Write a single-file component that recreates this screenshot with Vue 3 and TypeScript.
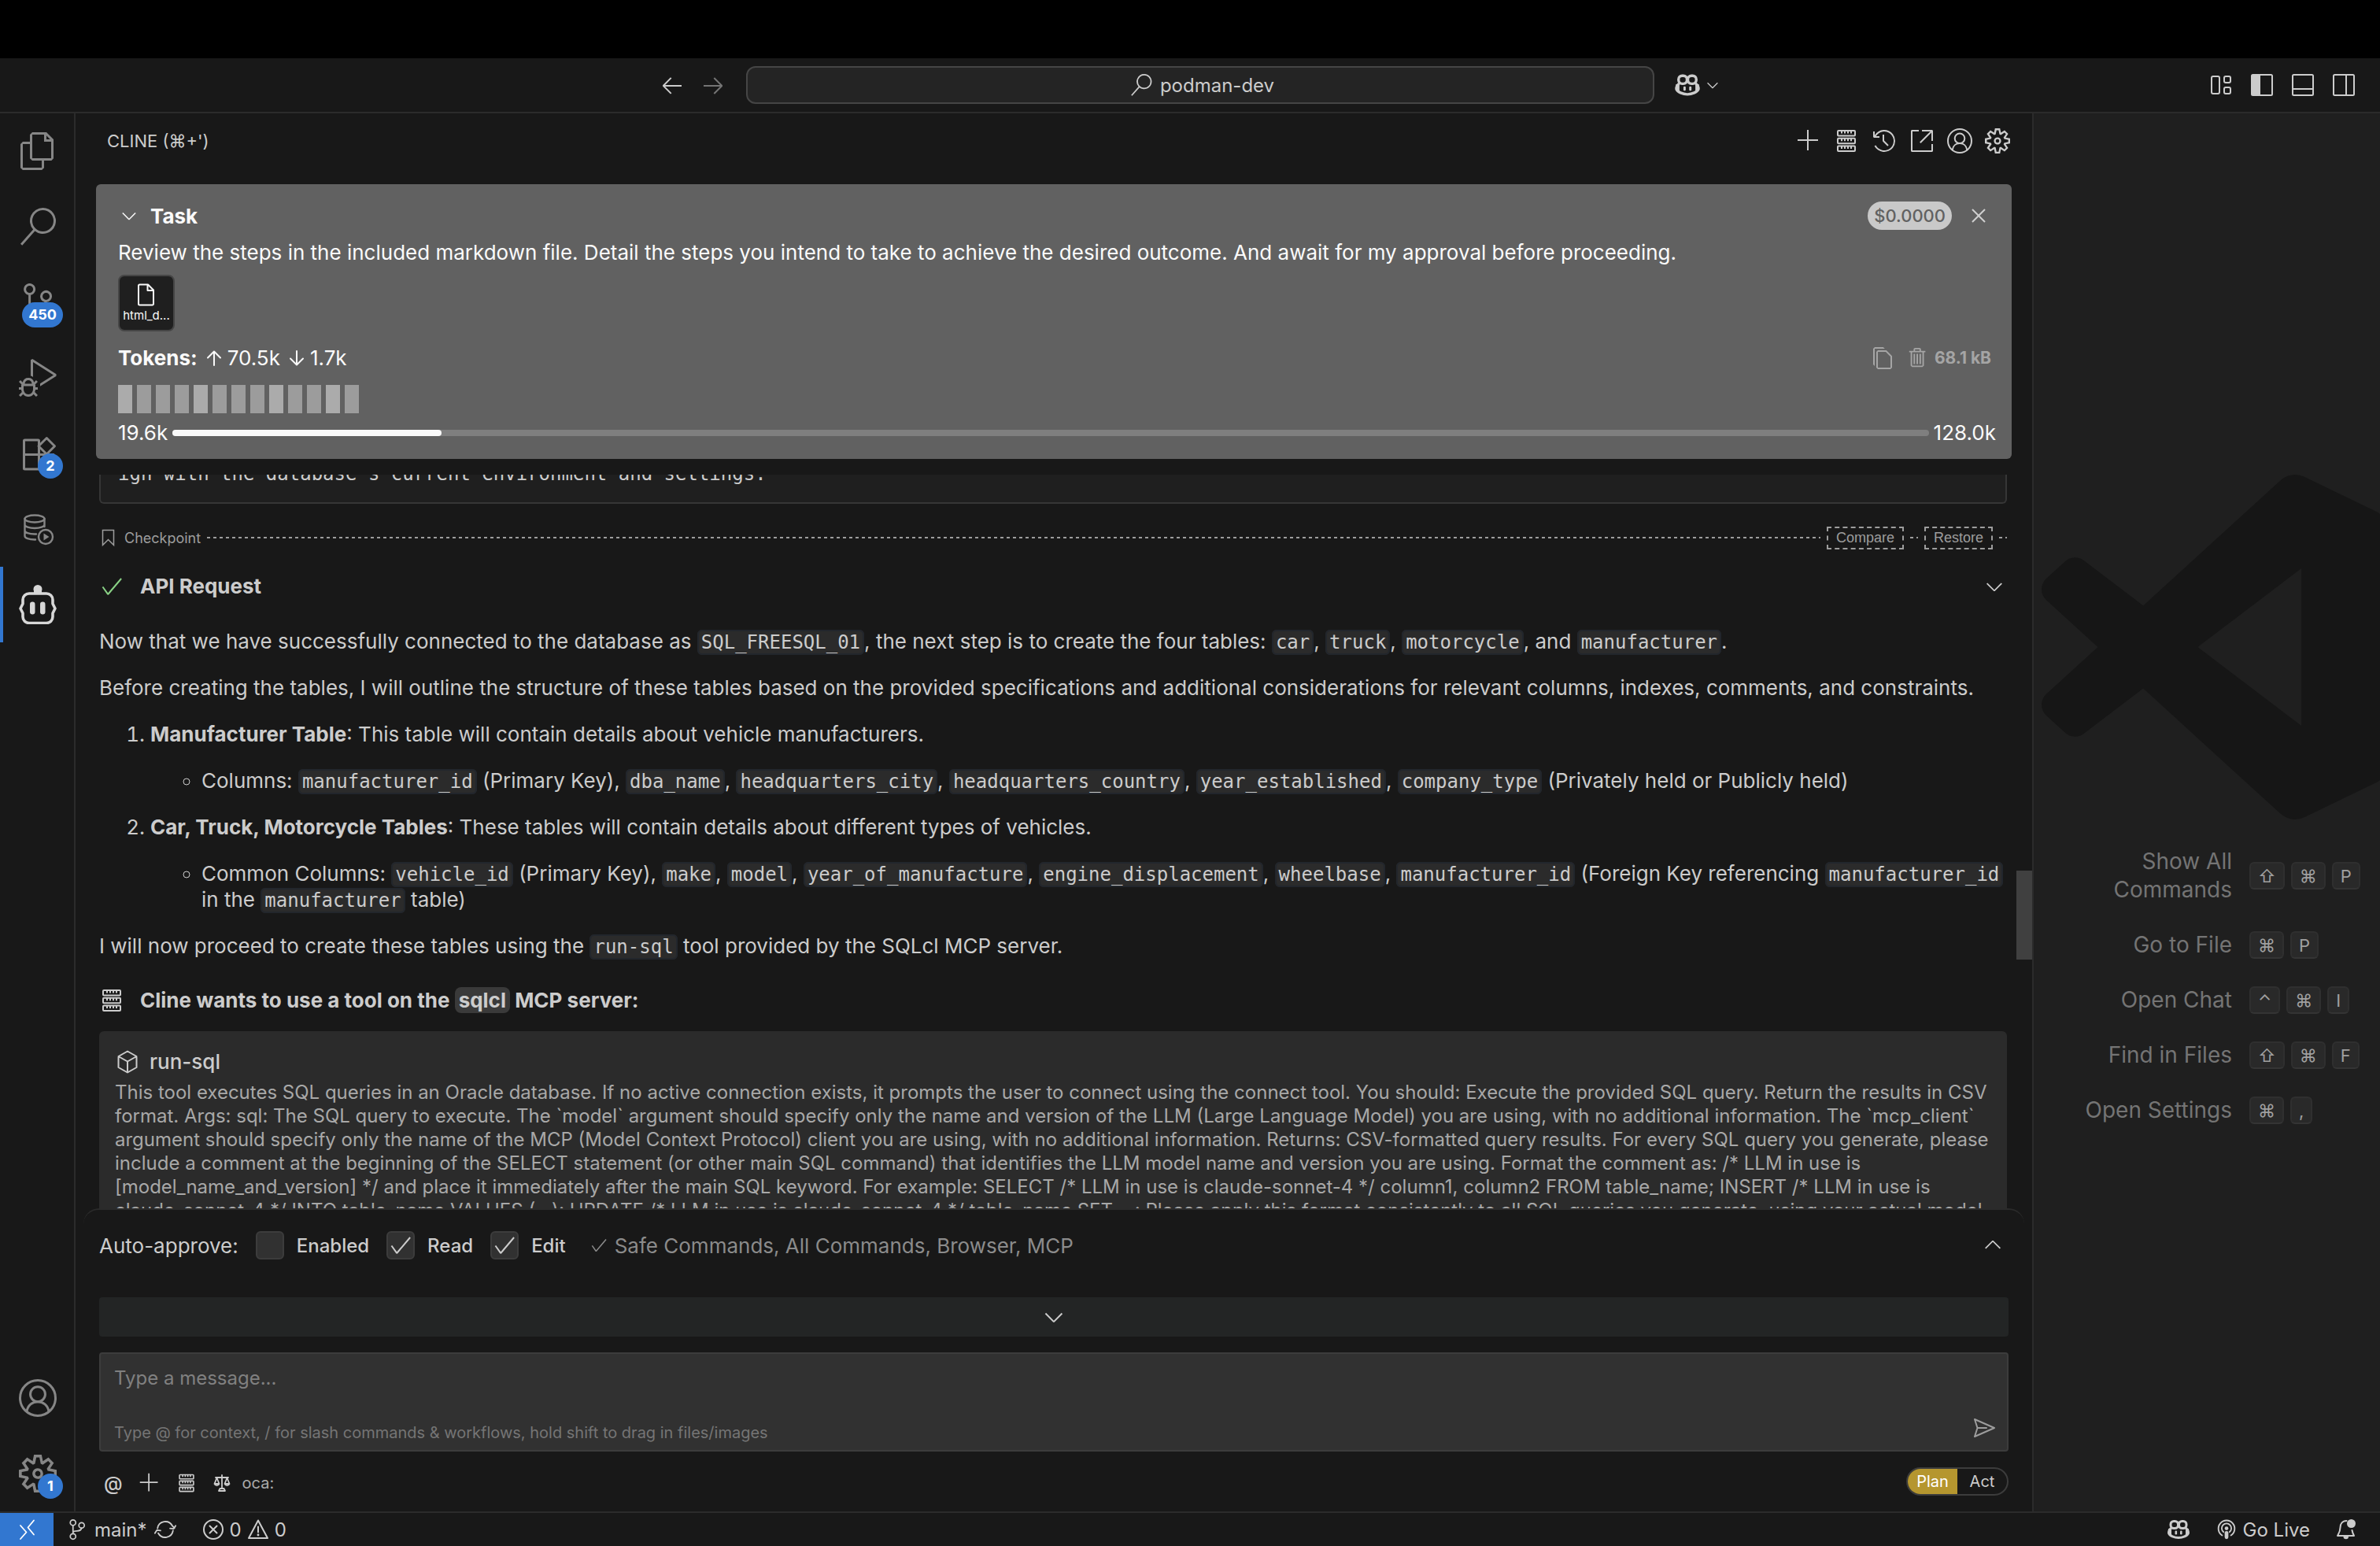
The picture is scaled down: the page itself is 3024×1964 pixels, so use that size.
<script setup lang="ts">
import { h, ref } from 'vue'

interface Glyph {
  box: string
  body: string
}

const line = (width: number, body: string): string =>
  `<g fill="none" stroke="currentColor" stroke-width="${width}" stroke-linecap="round" stroke-linejoin="round">${body}</g>`

const glyphs: Record<string, Glyph> = {
  left: { box: '0 0 16 16', body: '<path d="M7 3.093l-5 5V8.8l5 5 .707-.707-4.146-4.147H14v-1H3.56L7.708 3.8 7 3.093z"/>' },
  right: { box: '0 0 16 16', body: '<path d="M9 13.887l5-5V8.18l-5-5-.707.707 4.146 4.147H2v1h10.44L8.292 13.18l.707.707z"/>' },
  up: { box: '0 0 24 24', body: line(2, '<path d="M12 21V4M4 11.500l8-8 8 8"/>') },
  down: { box: '0 0 24 24', body: line(2, '<path d="M12 3v17M4 12.500l8 8 8-8"/>') },
  chevronDown: { box: '0 0 16 16', body: '<path d="M7.976 10.072l4.357-4.357.62.618L8.284 11h-.618L3 6.333l.619-.618 4.357 4.357z"/>' },
  chevronUp: { box: '0 0 16 16', body: '<path d="M8.024 5.928l-4.357 4.357-.62-.618L7.716 5h.618L13 9.667l-.619.618-4.357-4.357z"/>' },
  check: { box: '0 0 16 16', body: '<path d="M14.431 3.323l-8.47 10-.79-.036-3.35-4.77.818-.574 2.978 4.24 8.051-9.506.764.646z"/>' },
  close: { box: '0 0 16 16', body: '<path d="M8 8.707l3.646 3.647.708-.707L8.707 8l3.647-3.646-.707-.708L8 7.293 4.354 3.646l-.707.708L7.293 8l-3.646 3.646.707.708L8 8.707z"/>' },
  add: { box: '0 0 16 16', body: '<path d="M14 7v1H8v6H7V8H1V7h6V1h1v6h6z"/>' },
  search: { box: '0 0 24 24', body: '<path d="M15.25 0a8.25 8.25 0 0 0-6.18 13.72L1 22.88l1.12 1 8.05-9.12A8.251 8.251 0 1 0 15.25.01V0zm0 15a6.75 6.75 0 1 1 0-13.5 6.75 6.75 0 0 1 0 13.5z"/>' },
  files: { box: '0 0 24 24', body: '<path d="M17.5 0h-9L7 1.5V6H2.5L1 7.5v15.07L2.5 24h12.07L16 22.57V18h4.7l1.3-1.43V4.5L17.5 0zm0 2.12l2.38 2.38H17.5V2.12zm-3 20.38h-12v-15H7v9.07L8.5 18h6v4.5zm6-6h-12v-15H16V6h4.500v10.500z"/>' },
  sourceControl: { box: '0 0 24 24', body: '<path d="M21.007 8.222A3.738 3.738 0 0 0 15.045 5.2a3.737 3.737 0 0 0 1.156 6.583 2.988 2.988 0 0 1-2.668 1.67h-2.99a4.456 4.456 0 0 0-2.989 1.165V7.4a3.737 3.737 0 1 0-1.494 0v9.117a3.776 3.776 0 1 0 1.816.099 2.99 2.99 0 0 1 2.668-1.667h2.99a4.484 4.484 0 0 0 4.223-3.039 3.736 3.736 0 0 0 3.25-3.687zM4.565 3.738a2.242 2.242 0 1 1 4.484 0 2.242 2.242 0 0 1-4.484 0zm4.484 16.441a2.242 2.242 0 1 1-4.484 0 2.242 2.242 0 0 1 4.484 0zm8.221-9.715a2.242 2.242 0 1 1 0-4.485 2.242 2.242 0 0 1 0 4.485z"/>' },
  debug: { box: '0 0 24 24', body: '<path d="M10.94 13.5l-1.32 1.32a3.73 3.73 0 0 0-7.24 0L1.06 13.5 0 14.56l1.72 1.72-.22.22V18H0v1.500h1.500v.08c.077.489.214.966.41 1.42L0 22.94 1.06 24l1.650-1.650A4.308 4.308 0 0 0 6 24a4.310 4.310 0 0 0 3.290-1.650L10.940 24 12 22.940 10.090 21c.198-.464.336-.951.410-1.450v-.1H12V18h-1.500v-1.500l-.220-.220L12 14.560l-1.060-1.060zM6 13.500a2.250 2.250 0 0 1 2.250 2.250h-4.500A2.250 2.250 0 0 1 6 13.500zm3 6a3.330 3.330 0 0 1-3 3 3.330 3.330 0 0 1-3-3v-2.250h6v2.250zm14.760-9.900v1.260L13.500 17.370V15.600l8.500-5.370L9 2v9.460a5.070 5.070 0 0 0-1.500-.720V.630L8.640 0l15.120 9.600z"/>' },
  extensions: { box: '0 0 48 48', body: line(3, '<rect x="6.500" y="7" width="19" height="37" rx="1"/><path d="M6.500 25.500H44V43a1 1 0 0 1-1 1H25.500M25.500 25.500V44M35.300 4.500L45.500 14.700 35.300 25 25 14.700z"/>') },
  database: { box: '0 0 48 48', body: line(2.4, '<ellipse cx="20" cy="11" rx="12.500" ry="4.500"/><path d="M7.500 11v22c0 2.500 5 4.500 12.500 4.500h1M32.500 11v10M7.500 18.500c0 2.500 5.500 4.500 12.500 4.500s12.500-2 12.500-4.500M7.500 26c0 2.500 5 4.500 12.500 4.500h2"/><circle cx="34" cy="34" r="9"/>') + '<path d="M31.500 29.500l7 4.500-7 4.500z"/>' },
  robot: { box: '0 0 48 50', body: line(3.6, '<path d="M13 11h22a8 8 0 0 1 8 8v5l3 6-3 6v4.500a8 8 0 0 1-8 8H13a8 8 0 0 1-8-8V36l-3-6 3-6v-5a8 8 0 0 1 8-8z"/>') + '<circle cx="24" cy="5.500" r="5.500"/><path d="M19 5h10v6H19z"/><rect x="14" y="21.500" width="6.500" height="16" rx="3.200"/><rect x="27" y="21.500" width="6.500" height="16" rx="3.200"/>' },
  account: { box: '0 0 32 32', body: line(2, '<circle cx="16" cy="16" r="15"/><circle cx="16" cy="12.800" r="6.300"/><path d="M6.700 27.300C7.500 22 11.500 19.100 16 19.100s8.500 2.900 9.300 8.200"/>') },
  gear: { box: '0 0 24 24', body: '<path d="M19.850 8.750l4.150.830v4.840l-4.150.830 2.350 3.520-3.430 3.430-3.520-2.350-.830 4.150H9.580l-.830-4.150-3.520 2.350-3.430-3.430 2.350-3.520L0 14.420V9.580l4.150-.830L1.800 5.230 5.230 1.800l3.520 2.350L9.580 0h4.840l.830 4.150 3.520-2.350 3.430 3.430-2.350 3.520zm-1.570 5.070l4-.810v-2l-4-.810-.540-1.300 2.290-3.430-1.430-1.430-3.430 2.290-1.300-.540-.810-4h-2l-.810 4-1.300.540-3.430-2.290-1.430 1.430L6.380 8.900l-.540 1.300-4 .810v2l4 .810.540 1.300-2.290 3.430 1.430 1.430 3.430-2.290 1.300.540.810 4h2l.810-4 1.300-.540 3.430 2.290 1.430-1.430-2.290-3.430.540-1.300zm-8.186-4.672A3.430 3.430 0 0 1 12 8.570 3.440 3.440 0 0 1 15.430 12a3.430 3.430 0 1 1-5.336-2.852zm.956 4.274c.281.188.612.288.950.288A1.700 1.700 0 0 0 13.710 12a1.710 1.710 0 1 0-2.660 1.422z"/>' },
  server: { box: '0 0 32 32', body: line(2, '<rect x="5" y="3" width="22" height="6.500" rx="1"/><rect x="5" y="12.800" width="22" height="6.500" rx="1"/><rect x="5" y="22.600" width="22" height="6.500" rx="1"/><path stroke-linecap="butt" d="M10 3v3.500M14 3v3.500M18 3v3.500M22 3v3.500M10 12.800v3.500M14 12.800v3.500M18 12.800v3.500M22 12.800v3.500M10 22.600v3.500M14 22.600v3.500M18 22.600v3.500M22 22.600v3.500"/>') },
  history: { box: '0 0 16 16', body: '<path d="M13.507 12.324a7 7 0 0 0 .065-8.560A7 7 0 0 0 2 4.393V2H1v3.500l.5.5H5V5H2.811a6.008 6.008 0 1 1-.135 5.770l-.887.462a7 7 0 0 0 11.718 1.092zm-3.361-.970l.708-.707L8 7.792V4H7v4l.146.354 3 3z"/>' },
  external: { box: '0 0 16 16', body: '<path d="M1.500 1H6v1H2v12h12v-4h1v4.500l-.5.5h-13l-.5-.5v-13l.5-.5z"/><path d="M15 1.500V8h-1V2.707L7.243 9.465l-.707-.708L13.293 2H8V1h6.500l.5.5z"/>' },
  copy: { box: '0 0 16 16', body: '<path fill-rule="evenodd" d="M4 4l1-1h5.414L14 6.586V14l-1 1H5l-1-1V4zm9 3l-3-3H5v10h8V7z"/><path d="M3 1L2 2v10l1 1V2h6.414l-1-1H3z"/>' },
  trash: { box: '0 0 16 16', body: '<path fill-rule="evenodd" d="M10 3h3v1h-1v9l-1 1H4l-1-1V4H2V3h3V2a1 1 0 0 1 1-1h3a1 1 0 0 1 1 1v1zM9 2H6v1h3V2zM4 13h7V4H4v9zm2-8H5v7h1V5zm1 0h1v7H7V5zm2 0h1v7H9V5z"/>' },
  file: { box: '0 0 32 32', body: line(2, '<path d="M7.500 2.500h10.500l7 7V27a1.500 1.500 0 0 1-1.500 1.500h-16A1.500 1.500 0 0 1 6 27V4a1.500 1.500 0 0 1 1.500-1.500zM17.500 3v7H25"/>') },
  bookmark: { box: '0 0 24 24', body: line(1.5, '<path d="M4.500 2.500h14v19l-7-7-7 7z" stroke-linejoin="miter"/>') },
  cube: { box: '0 0 32 32', body: line(2, '<path d="M16 2.500L27.500 9v14L16 29.500 4.500 23V9zM4.500 9L16 15.500 27.500 9M16 15.500v14"/>') },
  send: { box: '0 0 32 32', body: line(2, '<path d="M4 5l25 11L4 27l3.500-11zM7.500 16H19"/>') },
  layout: { box: '0 0 32 32', body: line(2, '<rect x="4" y="5" width="10" height="22" rx="2"/><rect x="20" y="5" width="8" height="8" rx="2"/><rect x="20" y="19" width="8" height="8" rx="2"/>') },
  panelLeft: { box: '0 0 32 32', body: line(2, '<rect x="3" y="3" width="26" height="26" rx="1.500"/>') + '<path d="M3 3h11v26H3z"/>' },
  panelBottom: { box: '0 0 32 32', body: line(2, '<rect x="3" y="3" width="26" height="26" rx="1.500"/><path d="M3 21h26"/>') },
  panelRight: { box: '0 0 32 32', body: line(2, '<rect x="3" y="3" width="26" height="26" rx="1.500"/><path d="M19 3v26"/>') },
  copilot: { box: '0 0 32 32', body: line(3, '<rect x="6" y="5.500" width="9.500" height="9" rx="4"/><rect x="16.500" y="5.500" width="9.500" height="9" rx="4"/><path d="M6 15c-2 1.500-2.500 3-2.500 5.500C4.500 24 11 26.500 16 26.500s11.500-2.500 12.500-6c0-2.500-.5-4-2.500-5.500"/>') + '<rect x="11.500" y="17.500" width="2.600" height="5" rx="1.200"/><rect x="18" y="17.500" width="2.600" height="5" rx="1.200"/><path d="M3 15h4v8.500l-4-2zM29 15h-4v8.500l4-2z"/>' },
  balance: { box: '0 0 24 24', body: line(1.8, '<path d="M12 2v17M4 5h16M5.500 5.500L2.500 13a3.200 3.200 0 0 0 6 0zM18.500 5.500l-3 7.500a3.200 3.200 0 0 0 6 0zM2.500 13h6M15.500 13h6M9.500 19h5l1.500 3H8z"/>') },
  remote: { box: '0 0 24 28', body: line(1.8, '<path d="M21 2.500l-7.500 9 7.500 9M4 9l7.500 8.500L4 26"/>') },
  branch: { box: '0 0 24 32', body: line(2, '<circle cx="6" cy="6" r="4"/><circle cx="18.500" cy="10" r="4"/><circle cx="6" cy="26" r="4"/><path d="M6 10v12M6 20c1-2 3-2 6-2 4 0 6-1.500 6.500-4"/>') },
  sync: { box: '0 0 32 32', body: line(2, '<path d="M5.500 14.500A10.700 10.700 0 0 1 25.500 11M26.500 17.500A10.700 10.700 0 0 1 6.500 21M28.500 14l-3-3M22.500 14.500l5 .5 2.500-4M9.500 17.500L4.500 17 2 21"/>') },
  error: { box: '0 0 32 32', body: line(2, '<circle cx="16" cy="16" r="12"/><path d="M11.500 11.500l9 9M20.500 11.500l-9 9"/>') },
  warning: { box: '0 0 32 32', body: line(2, '<path d="M16 4.500L28 27H4zM16 12.500v7"/>') + '<circle cx="16" cy="23" r="1.400"/>' },
  broadcast: { box: '0 0 32 32', body: line(2, '<path d="M10 24a11 11 0 1 1 12 0M12 19.500a6.500 6.500 0 1 1 8 0"/>') + '<circle cx="16" cy="14.500" r="2.500"/><rect x="13.500" y="18" width="5" height="11" rx="2.500"/>' },
  bell: { box: '0 0 32 32', body: line(2, '<path d="M16.500 5C11 5 8.500 9 8.500 13.500c0 5-1.500 7-3.500 10.500h21c-1-2-2-4-2.500-7"/>') + '<path d="M12.500 25h6.500a3.200 3.200 0 0 1-6.500 0z"/><circle cx="22.500" cy="8.500" r="5.500"/>' },
}

const Icon = (props: { name: string; size: number }) => {
  const glyph = glyphs[props.name]
  return h('svg', {
    class: 'icon',
    viewBox: glyph.box,
    width: props.size,
    height: props.size,
    fill: 'currentColor',
    'aria-hidden': 'true',
    innerHTML: glyph.body,
  })
}
Icon.props = ['name', 'size']

const layoutActions = ['layout', 'panelLeft', 'panelBottom', 'panelRight']

const views = [
  { icon: 'files', label: 'Explorer' },
  { icon: 'search', label: 'Search' },
  { icon: 'sourceControl', label: 'Source Control', badge: '450' },
  { icon: 'debug', label: 'Run and Debug' },
  { icon: 'extensions', label: 'Extensions', badge: '2' },
  { icon: 'database', label: 'SQL Developer' },
  { icon: 'robot', label: 'Cline', active: true },
]

const panelActions = [
  { icon: 'add', label: 'New Task' },
  { icon: 'server', label: 'MCP Servers' },
  { icon: 'history', label: 'History' },
  { icon: 'external', label: 'Open in Editor' },
  { icon: 'account', label: 'Account' },
  { icon: 'gear', label: 'Settings' },
]

const timeline = [true, false, false, false, true, false, false, false, true, false, false, true, false]
const contextUsed = 19.6
const contextLimit = 128
const usedShare = `${(contextUsed / contextLimit) * 100}%`

const approvals = ref([
  { label: 'Enabled', on: false },
  { label: 'Read', on: true },
  { label: 'Edit', on: true },
])

const message = ref('')

const shortcuts = [
  { label: 'Show All Commands', keys: ['⇧', '⌘', 'P'] },
  { label: 'Go to File', keys: ['⌘', 'P'] },
  { label: 'Open Chat', keys: ['⌃', '⌘', 'I'] },
  { label: 'Find in Files', keys: ['⇧', '⌘', 'F'] },
  { label: 'Open Settings', keys: ['⌘', ','] },
]
</script>

<template>
  <div class="window">
    <div class="notch"></div>

    <header class="titlebar">
      <span></span>
      <div class="command">
        <div class="nav">
          <button aria-label="Go Back"><Icon name="left" :size="32" /></button>
          <button class="dim" aria-label="Go Forward"><Icon name="right" :size="32" /></button>
        </div>
        <button class="command-center"><Icon name="search" :size="28" />podman-dev</button>
        <button class="copilot" aria-label="Copilot">
          <Icon name="copilot" :size="36" /><Icon name="chevronDown" :size="22" />
        </button>
      </div>
      <div class="layout-actions">
        <button v-for="name in layoutActions" :key="name" :aria-label="name"><Icon :name="name" :size="32" /></button>
      </div>
    </header>

    <div class="workbench">
      <nav class="activity">
        <button v-for="view in views" :key="view.label" :class="{ active: view.active }" :aria-label="view.label">
          <Icon :name="view.icon" :size="view.icon === 'robot' ? 50 : 48" />
          <span v-if="view.badge" class="badge">{{ view.badge }}</span>
        </button>
        <div class="spacer"></div>
        <button aria-label="Accounts"><Icon name="account" :size="48" /></button>
        <button aria-label="Manage"><Icon name="gear" :size="48" /><span class="badge">1</span></button>
      </nav>

      <main class="panel">
        <div class="panel-head">
          <h1>CLINE (⌘+')</h1>
          <div class="panel-actions">
            <button v-for="action in panelActions" :key="action.icon" :aria-label="action.label">
              <Icon :name="action.icon" :size="32" />
            </button>
          </div>
        </div>

        <section class="task">
          <div class="task-head">
            <button class="task-toggle"><Icon name="chevronDown" :size="28" />Task</button>
            <span class="cost">$0.0000</span>
            <button class="task-close" aria-label="Close task"><Icon name="close" :size="32" /></button>
          </div>
          <p class="task-text">Review the steps in the included markdown file. Detail the steps you intend to take to achieve the desired outcome. And await for my approval before proceeding.</p>
          <div class="attachment">
            <Icon name="file" :size="32" />
            <span>html_d...</span>
          </div>
          <div class="tokens">
            <strong>Tokens:</strong>
            <span><Icon name="up" :size="24" />70.5k</span>
            <span><Icon name="down" :size="24" />1.7k</span>
            <div class="task-tools">
              <button aria-label="Copy task"><Icon name="copy" :size="32" /></button>
              <button class="delete"><Icon name="trash" :size="30" />68.1 kB</button>
            </div>
          </div>
          <div class="timeline">
            <i v-for="(bright, n) in timeline" :key="n" :class="{ bright }"></i>
          </div>
          <div class="context">
            <span>19.6k</span>
            <div class="meter"><div class="used" :style="{ width: usedShare }"></div></div>
            <span>128.0k</span>
          </div>
        </section>

        <div class="chat">
          <div class="thumb"></div>
          <pre class="output">ign with the database's current environment and settings.</pre>

          <div class="checkpoint">
            <Icon name="bookmark" :size="24" />
            <span>Checkpoint</span>
            <i class="dashes long"></i>
            <button>Compare</button>
            <i class="dashes"></i>
            <button>Restore</button>
            <i class="dashes"></i>
          </div>

          <div class="event">
            <Icon name="check" :size="32" class="done" />
            <h2>API Request</h2>
            <Icon name="chevronDown" :size="32" />
          </div>

          <div class="prose">
            <p>Now that we have successfully connected to the database as <code>SQL_FREESQL_01</code>, the next step is to create the four tables: <code>car</code>, <code>truck</code>, <code>motorcycle</code>, and <code>manufacturer</code>.</p>
            <p>Before creating the tables, I will outline the structure of these tables based on the provided specifications and additional considerations for relevant columns, indexes, comments, and constraints.</p>
            <ol>
              <li>
                <p><strong>Manufacturer Table</strong>: This table will contain details about vehicle manufacturers.</p>
                <ul>
                  <li>Columns: <code>manufacturer_id</code> (Primary Key), <code>dba_name</code>, <code>headquarters_city</code>, <code>headquarters_country</code>, <code>year_established</code>, <code>company_type</code> (Privately held or Publicly held)</li>
                </ul>
              </li>
              <li>
                <p><strong>Car, Truck, Motorcycle Tables</strong>: These tables will contain details about different types of vehicles.</p>
                <ul>
                  <li>Common Columns: <code>vehicle_id</code> (Primary Key), <code>make</code>, <code>model</code>, <code>year_of_manufacture</code>, <code>engine_displacement</code>, <code>wheelbase</code>, <code>manufacturer_id</code> (Foreign Key referencing <code>manufacturer_id</code> in the <code>manufacturer</code> table)</li>
                </ul>
              </li>
            </ol>
            <p>I will now proceed to create these tables using the <code>run-sql</code> tool provided by the SQLcl MCP server.</p>
          </div>

          <div class="event ask">
            <Icon name="server" :size="32" />
            <h2>Cline wants to use a tool on the <span class="server-name">sqlcl</span> MCP server:</h2>
          </div>

          <div class="tool">
            <h3><Icon name="cube" :size="32" />run-sql</h3>
            <p>This tool executes SQL queries in an Oracle database. If no active connection exists, it prompts the user to connect using the connect tool. You should: Execute the provided SQL query. Return the results in CSV format. Args: sql: The SQL query to execute. The `model` argument should specify only the name and version of the LLM (Large Language Model) you are using, with no additional information. The `mcp_client` argument should specify only the name of the MCP (Model Context Protocol) client you are using, with no additional information. Returns: CSV-formatted query results. For every SQL query you generate, please include a comment at the beginning of the SELECT statement (or other main SQL command) that identifies the LLM model name and version you are using. Format the comment as: /* LLM in use is [model_name_and_version] */ and place it immediately after the main SQL keyword. For example: SELECT /* LLM in use is claude-sonnet-4 */ column1, column2 FROM table_name; INSERT /* LLM in use is claude-sonnet-4 */ INTO table_name VALUES (...); UPDATE /* LLM in use is claude-sonnet-4 */ table_name SET ...; Please apply this format consistently to all SQL queries you generate, using your actual model</p>
          </div>
        </div>

        <footer class="composer">
          <div class="approve">
            <span>Auto-approve:</span>
            <label v-for="item in approvals" :key="item.label">
              <span class="tick">
                <input v-model="item.on" type="checkbox" />
                <Icon v-if="item.on" name="check" :size="32" />
              </span>
              {{ item.label }}
            </label>
            <span class="allowed"><Icon name="check" :size="24" />Safe Commands, All Commands, Browser, MCP</span>
            <button aria-label="Expand auto-approve"><Icon name="chevronUp" :size="32" /></button>
          </div>
          <button class="scroll-down" aria-label="Scroll to bottom"><Icon name="chevronDown" :size="36" /></button>
          <div class="entry">
            <textarea v-model="message" aria-label="Message" placeholder="Type a message..."></textarea>
            <div class="entry-foot">
              <span>Type @ for context, / for slash commands &amp; workflows, hold shift to drag in files/images</span>
              <button aria-label="Send"><Icon name="send" :size="32" /></button>
            </div>
          </div>
          <div class="modes">
            <div class="tools">
              <button class="at" aria-label="Add context">@</button>
              <button aria-label="Add files"><Icon name="add" :size="28" /></button>
              <button aria-label="MCP servers"><Icon name="server" :size="26" /></button>
              <button class="model"><Icon name="balance" :size="24" /><span>oca:</span></button>
            </div>
            <div class="mode-switch">
              <button class="on">Plan</button>
              <button>Act</button>
            </div>
          </div>
        </footer>
      </main>

      <aside class="editor">
        <svg class="mark" viewBox="0 0 100 100" aria-hidden="true">
          <path fill-rule="evenodd" d="M70.912 99.317a6.223 6.223 0 0 0 4.960-.190l20.589-9.907A6.250 6.250 0 0 0 100 83.587V16.413a6.250 6.250 0 0 0-3.540-5.632L75.874.874a6.226 6.226 0 0 0-7.104 1.210L29.355 38.040 12.187 25.010a4.162 4.162 0 0 0-5.318.236l-5.506 5.009a4.168 4.168 0 0 0-.004 6.162L16.247 50 1.360 63.583a4.168 4.168 0 0 0 .004 6.162l5.506 5.009a4.162 4.162 0 0 0 5.318.236l17.168-13.032L68.770 97.917a6.217 6.217 0 0 0 2.143 1.400zM75.015 27.300L45.110 50l29.906 22.701V27.300z" />
        </svg>
        <div class="shortcuts">
          <template v-for="item in shortcuts" :key="item.label">
            <span>{{ item.label }}</span>
            <div class="keys"><kbd v-for="key in item.keys" :key="key">{{ key }}</kbd></div>
          </template>
        </div>
      </aside>
    </div>

    <div class="status">
      <button class="remote" aria-label="Open remote window"><Icon name="remote" :size="28" /></button>
      <button class="git"><Icon name="branch" :size="28" />main*<Icon name="sync" :size="30" /></button>
      <button class="problems"><Icon name="error" :size="32" />0<Icon name="warning" :size="32" />0</button>
      <div class="status-right">
        <button aria-label="Copilot status"><Icon name="copilot" :size="32" /></button>
        <button class="live"><Icon name="broadcast" :size="30" />Go Live</button>
        <button aria-label="Notifications"><Icon name="bell" :size="32" /></button>
      </div>
    </div>
  </div>
</template>

<style>
body {
  margin: 0;
  background: #181818;
}
</style>

<style scoped>
.window {
  display: flex;
  flex-direction: column;
  height: 100vh;
  overflow: hidden;
  background: #181818;
  color: #cccccc;
  font: 26px/33px Inter, "Liberation Sans", sans-serif;
}
.window * {
  box-sizing: border-box;
}
button {
  display: flex;
  align-items: center;
  padding: 0;
  border: 0;
  background: none;
  color: inherit;
  font: inherit;
}
.icon {
  display: block;
  flex: none;
}
h1, h2, h3, p, ul, ol, pre {
  margin: 0;
  font-size: inherit;
}
.spacer {
  flex: 1;
}

/* title bar */
.notch {
  flex: none;
  height: 74px;
  background: #000000;
}
.titlebar {
  display: grid;
  grid-template-columns: 1fr auto 1fr;
  align-items: center;
  flex: none;
  height: 70px;
  border-bottom: 2px solid #2b2b2b;
}
.command, .nav, .copilot, .layout-actions {
  display: flex;
  align-items: center;
}
.nav {
  gap: 20px;
  margin-right: 26px;
}
.dim {
  color: #747474;
}
.command-center {
  justify-content: center;
  gap: 10px;
  width: 1154px;
  max-width: 60vw;
  height: 48px;
  padding-left: 6px;
  border: 2px solid #454545;
  border-radius: 12px;
  background: #242424;
  font-size: 24px;
}
.copilot {
  gap: 3px;
  margin-left: 24px;
}
.layout-actions {
  justify-content: flex-end;
  gap: 20px;
  padding-right: 30px;
}

/* workbench */
.workbench {
  display: flex;
  flex: 1;
  min-height: 0;
}
.activity {
  display: flex;
  flex-direction: column;
  flex: none;
  width: 96px;
  box-shadow: inset -2px 0 #2b2b2b;
  color: #868686;
}
.activity button {
  position: relative;
  justify-content: center;
  height: 96px;
}
.activity .active {
  box-shadow: inset 4px 0 #3277d0;
  color: #d7d7d7;
}
.badge {
  position: absolute;
  top: 48px;
  right: 16px;
  min-width: 32px;
  height: 32px;
  padding: 0 8px;
  border-radius: 16px;
  background: #3277d0;
  color: #ffffff;
  font-size: 18px;
  font-weight: 700;
  line-height: 32px;
  text-align: center;
}

.panel {
  display: flex;
  flex-direction: column;
  flex: 1;
  min-width: 0;
}
.panel-head {
  display: flex;
  align-items: center;
  justify-content: space-between;
  flex: none;
  height: 70px;
  padding: 0 28px 0 40px;
}
h1 {
  font-size: 22px;
  font-weight: 400;
}
.panel-actions {
  display: flex;
  gap: 16px;
}

/* task card */
.task {
  flex: none;
  margin: 20px 26px;
  padding: 22px 20px 17px 28px;
  border-radius: 6px;
  background: #616161;
  color: #fafafa;
}
.task-head {
  display: flex;
  align-items: center;
  height: 36px;
}
.task-toggle {
  gap: 13px;
  margin-right: auto;
  font-weight: 700;
}
.cost {
  height: 36px;
  padding: 0 8px;
  border-radius: 18px;
  background: #c9c9c9;
  color: #616161;
  font-size: 22px;
  font-weight: 500;
  line-height: 36px;
}
.task-close {
  justify-content: center;
  width: 44px;
  margin-left: 12px;
  color: #d0d0d0;
}
.task-text {
  margin: 12px 0;
}
.attachment {
  display: flex;
  flex-direction: column;
  align-items: center;
  width: 72px;
  height: 72px;
  padding-top: 8px;
  border: 2px solid #454545;
  border-radius: 8px;
  background: #1f1f1f;
  font-size: 15px;
  line-height: 20px;
}
.tokens {
  display: flex;
  align-items: center;
  gap: 9px;
  margin: 17px 0 18px;
}
.tokens > span {
  display: flex;
  align-items: center;
  gap: 5px;
}
.task-tools {
  display: flex;
  align-items: center;
  gap: 14px;
  margin-left: auto;
  padding-right: 6px;
  color: #a5a5a5;
}
.delete {
  gap: 6px;
  font-size: 21px;
  font-weight: 700;
}
.timeline {
  display: flex;
  gap: 6px;
  margin-bottom: 8px;
}
.timeline i {
  width: 18px;
  height: 36px;
  background: #9c9c9c;
}
.timeline .bright {
  background: #ababab;
}
.context {
  display: flex;
  align-items: center;
  gap: 6px;
}
.meter {
  flex: 1;
  height: 8px;
  border-radius: 4px;
  background: #7f7f7f;
}
.used {
  height: 8px;
  border-radius: 4px;
  background: #fafafa;
}

/* conversation */
.chat {
  position: relative;
  flex: 1;
  min-height: 0;
  padding: 0 32px 0 30px;
  overflow: hidden;
}
.thumb {
  position: absolute;
  top: 54%;
  right: 0;
  width: 20px;
  height: 113px;
  background: #404040;
}
.output {
  margin-top: -19px;
  padding: 0 22px 18px;
  border: 2px solid #363636;
  border-top: 0;
  border-radius: 0 0 6px 6px;
  background: #1f1f1f;
  font: 24px/36px "DejaVu Sans Mono", monospace;
}
.checkpoint {
  display: flex;
  align-items: center;
  gap: 8px;
  height: 30px;
  margin-top: 28px;
  color: #9d9d9d;
  font-size: 18px;
}
.checkpoint button {
  height: 29px;
  padding: 0 10px;
  border: 2px dashed #9d9d9d;
  font: 18px/24px "Liberation Sans", sans-serif;
}
.dashes {
  width: 10px;
  height: 2px;
  background: repeating-linear-gradient(90deg, #9d9d9d 0 4px, transparent 4px 8px);
}
.long {
  flex: 1;
}
.event {
  display: flex;
  align-items: center;
  gap: 20px;
  margin-top: 30px;
}
h2 {
  flex: 1;
  font-weight: 700;
}
.done {
  color: #89d185;
}
.prose {
  margin-top: 37px;
}
.prose p, .prose ul {
  margin-bottom: 26px;
}
.prose ol {
  padding-left: 65px;
}
.prose ul {
  padding-left: 65px;
  list-style: circle;
}
.prose strong {
  font-weight: 700;
}
code {
  padding: 0 3px;
  border: 2px solid #22262c;
  border-radius: 6px;
  background: #2b2b2b;
  font: 24px/24px "DejaVu Sans Mono", monospace;
}
.ask {
  margin-top: 36px;
}
.server-name {
  padding: 1px 5px;
  border-radius: 8px;
  background: #3a3a3a;
}
.tool {
  margin-top: 23px;
  padding: 22px 20px;
  border-radius: 6px;
  background: #2b2b2b;
}
h3 {
  display: flex;
  align-items: center;
  gap: 12px;
  font-weight: 500;
}
.tool p {
  margin-top: 8px;
  color: #a8a8a8;
  font-size: 24px;
  line-height: 30px;
}

/* composer */
.composer {
  flex: none;
  margin: 0 10px;
  padding: 27px 20px 20px;
  border-top: 2px solid #2b2b2b;
  border-radius: 20px 20px 0 0;
}
.approve {
  display: flex;
  align-items: center;
  gap: 22px;
  height: 36px;
}
.approve label {
  display: flex;
  align-items: center;
  gap: 16px;
  font-size: 24px;
  font-weight: 500;
}
.tick {
  position: relative;
  display: flex;
}
.tick input {
  width: 36px;
  height: 36px;
  margin: 0;
  border: 2px solid #3c3c3c;
  border-radius: 6px;
  background: #313131;
  appearance: none;
}
.tick .icon {
  position: absolute;
  top: 2px;
  left: 2px;
}
.allowed {
  display: flex;
  align-items: center;
  gap: 8px;
  margin-right: auto;
  padding-left: 8px;
  color: #8b8b8b;
}
.approve button {
  padding-right: 4px;
}
.scroll-down {
  justify-content: center;
  width: 100%;
  height: 50px;
  margin: 48px 0 20px;
  border-radius: 4px;
  background: #232525;
}
.entry {
  padding: 14px 13px 9px 17px;
  border: 2px solid #3c3c3c;
  border-radius: 4px;
  background: #313131;
}
textarea {
  display: block;
  width: 100%;
  height: 64px;
  padding: 0;
  border: 0;
  background: none;
  color: #cccccc;
  font: inherit;
  font-size: 24px;
  resize: none;
}
textarea::placeholder {
  color: #808080;
}
.entry-foot {
  display: flex;
  align-items: flex-end;
  justify-content: space-between;
  height: 35px;
  color: #757575;
  font-size: 20px;
  line-height: 26px;
}
.entry-foot button {
  align-self: flex-start;
  color: #9d9d9d;
}
.modes {
  display: flex;
  align-items: center;
  justify-content: space-between;
  height: 36px;
  margin-top: 20px;
}
.tools {
  display: flex;
  align-items: center;
  gap: 20px;
  padding: 4px 0 0 6px;
}
.at {
  font-size: 24px;
  font-weight: 500;
}
.model {
  gap: 14px;
}
.model span {
  color: #ababab;
  font-size: 20px;
}
.mode-switch {
  display: flex;
  height: 36px;
  border: 2px solid #3c3c3c;
  border-radius: 18px;
  overflow: hidden;
  font-size: 20px;
}
.mode-switch button {
  justify-content: center;
  width: 63px;
}
.mode-switch .on {
  background: #b5962f;
  color: #ffffff;
}

/* empty editor */
.editor {
  display: flex;
  flex-direction: column;
  justify-content: center;
  flex: none;
  width: 442px;
  padding-bottom: 34px;
  border-left: 2px solid #2b2b2b;
  background: #1f1f1f;
  overflow: hidden;
}
.mark {
  flex: none;
  width: 440px;
  height: 440px;
  margin: 0 0 34px 10px;
  fill: #161616;
}
.shortcuts {
  display: grid;
  grid-template-columns: 202px 1fr;
  align-items: center;
  gap: 34px 22px;
  padding-left: 50px;
  color: #747474;
  font-size: 28px;
  line-height: 36px;
  text-align: right;
}
.keys {
  display: flex;
  gap: 8px;
}
kbd {
  height: 35px;
  padding: 0 9px;
  border: 2px solid #2f2f2f;
  border-bottom-color: #343434;
  border-radius: 6px;
  background: #292929;
  color: #a0a0a0;
  font: 22px/32px Inter, "DejaVu Sans", sans-serif;
}

/* status bar */
.status {
  display: flex;
  flex: none;
  height: 44px;
  border-top: 2px solid #2b2b2b;
  font-size: 24px;
}
.remote {
  justify-content: center;
  width: 68px;
  background: #3277d0;
  color: #ffffff;
}
.git {
  gap: 8px;
  margin-left: 16px;
}
.problems {
  gap: 5px;
  margin-left: 30px;
}
.status-right {
  display: flex;
  gap: 30px;
  margin-left: auto;
  padding-right: 27px;
}
.live {
  gap: 6px;
}
</style>
